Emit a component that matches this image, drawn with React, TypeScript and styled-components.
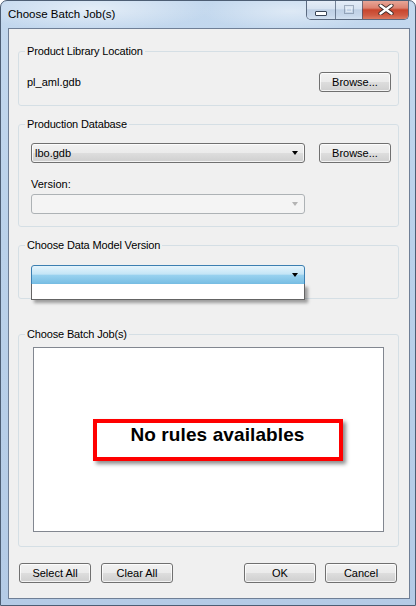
import React from "react";
import styled, { createGlobalStyle, css } from "styled-components";

const GlobalStyle = createGlobalStyle`
  html, body {
    margin: 0;
    padding: 0;
    background: #ffffff;
  }
  body {
    font-family: "Liberation Sans", Arial, sans-serif;
    font-size: 11px;
    color: #000;
  }
  * {
    box-sizing: border-box;
  }
`;

const Window = styled.div`
  width: 416px;
  height: 606px;
  display: flex;
  flex-direction: column;
  border: 1px solid #4d5e74;
  border-radius: 7px 7px 0 0;
  overflow: hidden;
  background:
    radial-gradient(ellipse 120px 22px at 90px 8px, rgba(255, 255, 255, 0.55), rgba(255, 255, 255, 0)),
    radial-gradient(ellipse 90px 20px at 290px 10px, rgba(255, 255, 255, 0.45), rgba(255, 255, 255, 0)),
    linear-gradient(180deg, #c3d8ee 0%, #bad1ea 40%, #b4cbe6 100%);
`;

const TitleBar = styled.div`
  height: 27px;
  display: flex;
  align-items: flex-start;
  flex-shrink: 0;
`;

const Title = styled.div`
  padding: 6px 0 0 7px;
  font-size: 11.5px;
  line-height: 14px;
  color: #000;
`;

const CaptionButtons = styled.div`
  margin: -1px 6px 0 auto;
  display: flex;
  height: 20px;
  border: 1px solid #5b6a80;
  border-top: none;
  border-radius: 0 0 5px 5px;
  overflow: hidden;
`;

const CaptionButton = styled.div<{ $w: number; $close?: boolean }>`
  width: ${(p) => p.$w}px;
  height: 100%;
  display: flex;
  align-items: center;
  justify-content: center;
  border-left: 1px solid rgba(70, 85, 110, 0.7);
  &:first-child {
    border-left: none;
  }
  ${(p) =>
    p.$close
      ? css`
          background: linear-gradient(180deg, #e9ab9d 0%, #dc8270 42%, #c8452d 52%, #cf5b43 80%, #dc7b62 100%);
        `
      : css`
          background: linear-gradient(180deg, #e6eef8 0%, #d7e3f1 45%, #bfd0e5 52%, #c6d6ea 80%, #d3e1f1 100%);
        `}
`;

const Client = styled.div`
  flex: 1;
  margin: 0 5px 6px 7px;
  background: #f0f0f0;
  border: 1px solid #6f7f96;
  display: flex;
  flex-direction: column;
  padding: 15px 10px 0 9px;
`;

type Pad = [number, number, number, number];

const Group = styled.fieldset<{ $gap: number; $pad: Pad }>`
  margin: ${(p) => p.$gap}px 0 0 0;
  padding: ${(p) => p.$pad.map((v) => `${v}px`).join(" ")};
  border: 1px solid #d5dfe5;
  border-radius: 3px;
  min-width: 0;

  & > legend {
    margin-left: ${(p) => 6 - p.$pad[3]}px;
  }
`;

const Legend = styled.legend`
  padding: 0 2px;
  font-size: 11px;
  line-height: 14px;
  letter-spacing: -0.15px;
`;

const Row = styled.div`
  display: flex;
  align-items: center;
`;

const PathText = styled.span`
  flex: 1;
  line-height: 20px;
`;

const buttonFace = css`
  border: 1px solid #707070;
  border-radius: 3px;
  background: linear-gradient(180deg, #f2f2f2 0%, #ebebeb 48%, #dddddd 52%, #cfcfcf 100%);
  box-shadow: inset 0 0 0 1px rgba(255, 255, 255, 0.75);
`;

const Button = styled.button<{ $ml?: number; $push?: boolean }>`
  ${buttonFace};
  width: 72px;
  height: 20px;
  margin: 0 0 0 ${(p) => (p.$push ? "auto" : `${p.$ml ?? 0}px`)};
  padding: 0;
  font-family: "Liberation Sans", Arial, sans-serif;
  font-size: 11px;
  color: #000;
  line-height: 18px;
  flex-shrink: 0;
`;

type ComboKind = "normal" | "disabled" | "active";

const ComboBox = styled.div<{ $kind: ComboKind }>`
  position: relative;
  width: 274px;
  height: 20px;
  display: flex;
  align-items: center;
  padding: 0 6px 0 3px;
  border-radius: 3px;
  ${(p) =>
    p.$kind === "normal" &&
    css`
      ${buttonFace};
    `}
  ${(p) =>
    p.$kind === "disabled" &&
    css`
      border: 1px solid #adb2b5;
      background: #f4f4f4;
    `}
  ${(p) =>
    p.$kind === "active" &&
    css`
      border: 1px solid #3c7fb1;
      border-radius: 3px 3px 0 0;
      background: linear-gradient(180deg, #e5f4fc 0%, #c4e5f6 45%, #98d1ef 52%, #76bde3 100%);
    `}
`;

const ComboValue = styled.span`
  flex: 1;
  line-height: 18px;
`;

const Arrow = styled.span<{ $muted?: boolean }>`
  width: 0;
  height: 0;
  border-left: 3.5px solid transparent;
  border-right: 3.5px solid transparent;
  border-top: 4px solid ${(p) => (p.$muted ? "#b4b4b4" : "#000")};
`;

const DropList = styled.div`
  position: absolute;
  top: 100%;
  left: -1px;
  width: 274px;
  height: 16px;
  background: #fff;
  border: 1px solid #646464;
  border-top: none;
  box-shadow: 3px 3px 3px rgba(0, 0, 0, 0.35);
  z-index: 2;
`;

const FieldLabel = styled.div`
  margin-top: 14px;
  line-height: 14px;
`;

const ComboSpacer = styled.div`
  margin-top: 3px;
`;

const ListBox = styled.div`
  height: 185px;
  background: #fff;
  border: 1px solid #828790;
  display: flex;
  align-items: center;
  justify-content: center;
  padding-left: 18px;
`;

const EmptyNotice = styled.div`
  width: 250px;
  height: 42px;
  border: 4px solid #ff0000;
  background: #fff;
  box-shadow: 3px 3px 4px rgba(0, 0, 0, 0.45);
  padding-top: 1px;
  text-align: center;
  font-family: "Liberation Sans", Arial, sans-serif;
  font-weight: bold;
  font-size: 19px;
  line-height: 22px;
  letter-spacing: 0.1px;
`;

const ButtonBar = styled.div`
  display: flex;
  margin-top: 16px;
  padding: 0 2px 0 1px;
`;

const MinimizeIcon = () => (
  <svg width="12" height="5" viewBox="0 0 12 5" style={{ marginTop: 7 }}>
    <rect x="0.5" y="0.5" width="11" height="4" rx="0.5" fill="#fff" stroke="#3a4658" />
  </svg>
);

const MaximizeIcon = () => (
  <svg width="10" height="9" viewBox="0 0 10 9" style={{ opacity: 0.45 }}>
    <rect x="0.5" y="0.5" width="9" height="8" fill="none" stroke="#5a6a80" />
    <rect x="2.5" y="3" width="5" height="3.5" fill="none" stroke="#ffffff" />
  </svg>
);

const CloseIcon = () => (
  <svg width="16" height="11" viewBox="0 0 16 11">
    <path d="M2.5 1.5 L13.5 9.5 M13.5 1.5 L2.5 9.5" stroke="#3b2a28" strokeWidth="4.2" strokeLinecap="round" />
    <path d="M2.5 1.5 L13.5 9.5 M13.5 1.5 L2.5 9.5" stroke="#ffffff" strokeWidth="2.4" strokeLinecap="round" />
  </svg>
);

export default function App() {
  return (
    <>
      <GlobalStyle />
      <Window>
        <TitleBar>
          <Title>Choose Batch Job(s)</Title>
          <CaptionButtons>
            <CaptionButton $w={28}>
              <MinimizeIcon />
            </CaptionButton>
            <CaptionButton $w={27}>
              <MaximizeIcon />
            </CaptionButton>
            <CaptionButton $w={46} $close>
              <CloseIcon />
            </CaptionButton>
          </CaptionButtons>
        </TitleBar>
        <Client>
          <Group $gap={0} $pad={[14, 7, 13, 8]}>
            <Legend>Product Library Location</Legend>
            <Row>
              <PathText>pl_aml.gdb</PathText>
              <Button>Browse...</Button>
            </Row>
          </Group>

          <Group $gap={11} $pad={[12, 7, 12, 12]}>
            <Legend>Production Database</Legend>
            <Row>
              <ComboBox $kind="normal">
                <ComboValue>lbo.gdb</ComboValue>
                <Arrow />
              </ComboBox>
              <Button $ml={14}>Browse...</Button>
            </Row>
            <FieldLabel>Version:</FieldLabel>
            <ComboSpacer>
              <ComboBox $kind="disabled">
                <ComboValue />
                <Arrow $muted />
              </ComboBox>
            </ComboSpacer>
          </Group>

          <Group $gap={11} $pad={[13, 7, 13, 12]}>
            <Legend>Choose Data Model Version</Legend>
            <ComboBox $kind="active">
              <ComboValue />
              <Arrow />
              <DropList />
            </ComboBox>
          </Group>

          <Group $gap={28} $pad={[6, 14, 14, 14]}>
            <Legend>Choose Batch Job(s)</Legend>
            <ListBox>
              <EmptyNotice>No rules availables</EmptyNotice>
            </ListBox>
          </Group>

          <ButtonBar>
            <Button>Select All</Button>
            <Button $ml={10}>Clear All</Button>
            <Button $push>OK</Button>
            <Button $ml={9}>Cancel</Button>
          </ButtonBar>
        </Client>
      </Window>
    </>
  );
}
